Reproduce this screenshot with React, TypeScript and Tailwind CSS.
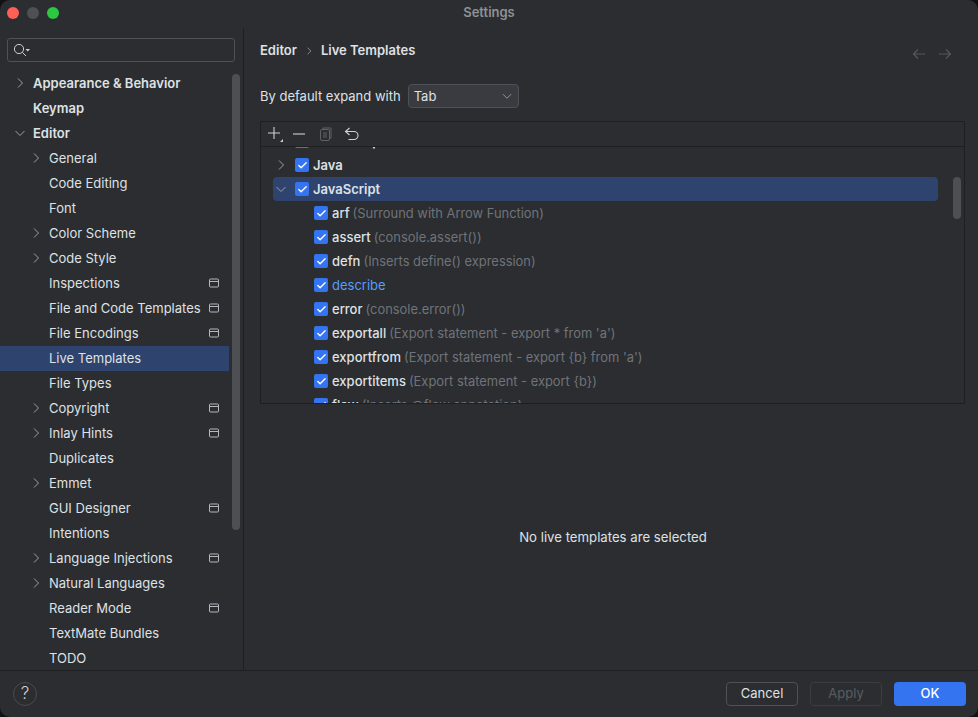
import { Check } from "lucide-react";

const navItems: { label: string; level: number; arrow?: "right" | "down"; page?: boolean; bold?: boolean; selected?: boolean }[] = [
  { label: "Appearance & Behavior", level: 0, arrow: "right", bold: true },
  { label: "Keymap", level: 0, bold: true },
  { label: "Editor", level: 0, arrow: "down", bold: true },
  { label: "General", level: 1, arrow: "right" },
  { label: "Code Editing", level: 1 },
  { label: "Font", level: 1 },
  { label: "Color Scheme", level: 1, arrow: "right" },
  { label: "Code Style", level: 1, arrow: "right" },
  { label: "Inspections", level: 1, page: true },
  { label: "File and Code Templates", level: 1, page: true },
  { label: "File Encodings", level: 1, page: true },
  { label: "Live Templates", level: 1, selected: true },
  { label: "File Types", level: 1 },
  { label: "Copyright", level: 1, arrow: "right", page: true },
  { label: "Inlay Hints", level: 1, arrow: "right", page: true },
  { label: "Duplicates", level: 1 },
  { label: "Emmet", level: 1, arrow: "right" },
  { label: "GUI Designer", level: 1, page: true },
  { label: "Intentions", level: 1 },
  { label: "Language Injections", level: 1, arrow: "right", page: true },
  { label: "Natural Languages", level: 1, arrow: "right" },
  { label: "Reader Mode", level: 1, page: true },
  { label: "TextMate Bundles", level: 1 },
  { label: "TODO", level: 1 },
];

const templates: { name: string; desc?: string; link?: boolean }[] = [
  { name: "arf", desc: "(Surround with Arrow Function)" },
  { name: "assert", desc: "(console.assert())" },
  { name: "defn", desc: "(Inserts define() expression)" },
  { name: "describe", link: true },
  { name: "error", desc: "(console.error())" },
  { name: "exportall", desc: "(Export statement - export * from 'a')" },
  { name: "exportfrom", desc: "(Export statement - export {b} from 'a')" },
  { name: "exportitems", desc: "(Export statement - export {b})" },
  { name: "flow", desc: "(Inserts @flow annotation)" },
];

function Chevron({ dir, className }: { dir: "right" | "down"; className?: string }) {
  return (
    <svg width="12" height="12" viewBox="0 0 12 12" fill="none" stroke="#9da0a8" strokeWidth="1" className={className}>
      {dir === "right" ? <path d="M4 1.5 L8.5 6 L4 10.5" /> : <path d="M1.5 4 L6 8.5 L10.5 4" />}
    </svg>
  );
}

function PageIcon() {
  return (
    <svg width="10" height="10" viewBox="0 0 10 10" fill="none" stroke="#b4b8bf" strokeWidth="1">
      <rect x="0.5" y="1" width="9" height="8" rx="1" />
      <path d="M0.5 3.5 H9.5" />
    </svg>
  );
}

function Checkbox() {
  return (
    <span className="flex h-[14px] w-[14px] shrink-0 items-center justify-center rounded-[2px] bg-[#3574f0]">
      <Check size={11} strokeWidth={3} color="#ffffff" />
    </span>
  );
}

function NavRow({ item }: { item: (typeof navItems)[number] }) {
  return (
    <div className={`relative flex h-[25px] shrink-0 items-center ${item.selected ? "bg-[#2e436e]" : ""}`}>
      {item.arrow && (
        <Chevron dir={item.arrow} className={`absolute top-[6px] ${item.level === 0 ? "left-[14px]" : "left-[30px]"}`} />
      )}
      <span className={`text-[13px] text-[#dfe1e5] ${item.level === 0 ? "pl-[33px]" : "pl-[49px]"} ${item.bold ? "font-semibold" : ""}`}>
        {item.label}
      </span>
      {item.page && (
        <span className="absolute right-[10px] top-[7px]">
          <PageIcon />
        </span>
      )}
    </div>
  );
}

export default function App() {
  return (
    <div className="h-[717px] w-[978px] overflow-hidden bg-[#111214] font-['Inter',sans-serif]">
      <div className="flex h-full flex-col overflow-hidden rounded-[10px] bg-[#2b2d30] text-[13px] text-[#dfe1e5]">
        {/* Title bar */}
        <div className="relative flex h-[28px] shrink-0 items-center justify-center">
          <div className="absolute left-[7px] top-[7px] flex gap-[8px]">
            <span className="h-3 w-3 rounded-full bg-[#fe5f57]" />
            <span className="h-3 w-3 rounded-full bg-[#4f5053]" />
            <span className="h-3 w-3 rounded-full bg-[#2bc840]" />
          </div>
          <span className="pb-[2px] text-[13px] font-semibold text-[#8f9196]">Settings</span>
        </div>

        <div className="flex min-h-0 flex-1">
          {/* Sidebar */}
          <div className="flex w-[244px] shrink-0 flex-col border-r border-[#1e1f22]">
            <div className="px-[7px] pt-[10px]">
              <div className="flex h-[24px] w-[228px] items-center rounded-[3px] border border-[#4e5157] pl-[6px]">
                <svg width="18" height="14" viewBox="0 0 18 14" fill="none" stroke="#ced0d6" strokeWidth="1">
                  <circle cx="5" cy="6" r="4.6" />
                  <path d="M8.4 9.4 L12 13" />
                  <path d="M11.5 6 H16 L13.75 8.4 Z" fill="#ced0d6" stroke="none" />
                </svg>
              </div>
            </div>
            <div className="relative mt-[7px] min-h-0 flex-1 overflow-hidden">
              <div className="mr-[14px] flex flex-col pt-[2px]">
                {navItems.map((item) => (
                  <NavRow key={item.label} item={item} />
                ))}
              </div>
              <div className="absolute right-[3px] top-[5px] h-[456px] w-2 rounded-full bg-[#4d4f52]" />
            </div>
          </div>

          {/* Content */}
          <div className="flex min-w-0 flex-1 flex-col pl-4 pr-3">
            <div className="flex h-[46px] shrink-0 items-center pb-[1px]">
              <span className="font-semibold">Editor</span>
              <Chevron dir="right" className="mx-[6px] scale-75" />
              <span className="font-semibold">Live Templates</span>
              <div className="ml-auto mr-[14px] mt-[6px] flex gap-[12px]">
                <svg width="14" height="12" viewBox="0 0 14 12" fill="none" stroke="#56585c" strokeWidth="1.2">
                  <path d="M13 6 H1.5 M6 1.5 L1.5 6 L6 10.5" />
                </svg>
                <svg width="14" height="12" viewBox="0 0 14 12" fill="none" stroke="#56585c" strokeWidth="1.2">
                  <path d="M1 6 H12.5 M8 1.5 L12.5 6 L8 10.5" />
                </svg>
              </div>
            </div>

            <div className="mt-[10px] flex h-[24px] shrink-0 items-center">
              <span className="pt-[2px] text-[13px]">By default expand with</span>
              <div className="ml-[7px] flex h-[24px] w-[111px] items-center justify-between rounded-[4px] border border-[#4e5157] bg-[#393b40] pl-[5px] pr-[5px]">
                <span className="pt-[2px] text-[13px]">Tab</span>
                <Chevron dir="down" className="scale-90" />
              </div>
            </div>

            {/* Template tree */}
            <div className="mt-[13px] flex h-[283px] w-[705px] shrink-0 flex-col border border-[#1e1f22]">
              <div className="flex h-[25px] shrink-0 items-center border-b border-[#1e1f22] pl-[6px]">
                <svg width="16" height="16" viewBox="0 0 16 16" fill="none" stroke="#ced0d6" strokeWidth="1.1">
                  <path d="M7 1 V13 M1 7 H13" />
                  <path d="M16 13 V16 H13 Z" fill="#ced0d6" stroke="none" />
                </svg>
                <svg width="14" height="14" viewBox="0 0 14 14" fill="none" stroke="#ced0d6" strokeWidth="1.1" className="ml-[9px]">
                  <path d="M1 7 H13" />
                </svg>
                <svg width="14" height="14" viewBox="0 0 14 14" fill="none" stroke="#5f6166" strokeWidth="1" className="ml-[13px]">
                  <path d="M4 2 V1 H12 V11 H11" />
                  <rect x="1.5" y="2.5" width="9" height="11" rx="1.5" />
                  <path d="M4 6 H8 M4 8 H8 M4 10 H8" />
                </svg>
                <svg width="16" height="14" viewBox="0 0 16 14" fill="none" stroke="#ced0d6" strokeWidth="1.1" className="ml-[11px]">
                  <path d="M5.5 1 L1.5 4.5 L5.5 8" />
                  <path d="M1.5 4.5 H10 A4 4 0 0 1 10 12.5 H4.5" />
                </svg>
              </div>
              <div className="relative min-h-0 flex-1 overflow-hidden">
                <div className="-mt-[18px] flex flex-col">
                  <div className="flex h-6 shrink-0 items-center pl-[34px]">
                    <Checkbox />
                    <span className="ml-[4px] pt-[2px] text-[13px] font-semibold">HTTP Request</span>
                  </div>
                  <div className="flex h-6 shrink-0 items-center pl-[14px]">
                    <Chevron dir="right" className="mr-[8px]" />
                    <Checkbox />
                    <span className="ml-[4px] pt-[2px] text-[13px] font-semibold">Java</span>
                  </div>
                  <div className="ml-3 flex h-6 w-[665px] shrink-0 items-center rounded-[4px] bg-[#2e436e] pl-[2px]">
                    <Chevron dir="down" className="mr-[8px]" />
                    <Checkbox />
                    <span className="ml-[4px] pt-[2px] text-[13px] font-semibold">JavaScript</span>
                  </div>
                  {templates.map((t) => (
                    <div key={t.name} className="flex h-6 shrink-0 items-center pl-[53px]">
                      <Checkbox />
                      <span className={`ml-[4px] pt-[2px] text-[13px] ${t.link ? "text-[#589df6]" : "font-medium"}`}>{t.name}</span>
                      {t.desc && <span className="ml-[3px] pt-[2px] text-[12.9px] text-[#6f737a]">{t.desc}</span>}
                    </div>
                  ))}
                </div>
                <div className="absolute right-[3px] top-[30px] h-[42px] w-2 rounded-full bg-[#4d4f52]" />
              </div>
            </div>

            <div className="flex min-h-0 flex-1 items-center justify-center pt-[1px]">
              <span className="text-[13.2px]">No live templates are selected</span>
            </div>
          </div>
        </div>

        {/* Footer */}
        <div className="flex h-[47px] shrink-0 items-center justify-between border-t border-[#1e1f22] pl-[13px] pr-3">
          <span className="flex h-6 w-6 items-center justify-center rounded-full border border-[#4a4c50] text-[17px] font-light text-[#ced0d6]">?</span>
          <div className="flex gap-3">
            <button className="h-6 w-[72px] rounded-[4px] border border-[#4e5157] text-[13px] text-[#dfe1e5]">Cancel</button>
            <button className="h-6 w-[72px] rounded-[4px] border border-[#3b3d41] text-[13px] text-[#5a5d63]">Apply</button>
            <button className="h-6 w-[72px] rounded-[4px] bg-[#3574f0] text-[13px] font-medium text-white">OK</button>
          </div>
        </div>
      </div>
    </div>
  );
}
